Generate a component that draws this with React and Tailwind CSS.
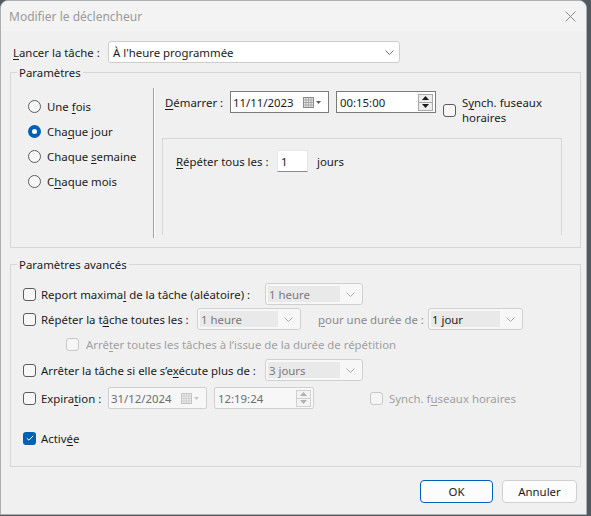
import React from "react";

const U = ({ children }) => (
  <span className="underline decoration-1 underline-offset-[2px]">{children}</span>
);

function Chevron({ color = "#8a8a8a" }) {
  return (
    <svg width="9" height="5" viewBox="0 0 9 5" fill="none">
      <path d="M0.5 0.5 L4.5 4.5 L8.5 0.5" stroke={color} strokeWidth="1" />
    </svg>
  );
}

function CalIcon({ disabled }) {
  const c = disabled ? "#c4c4c4" : "#8c8c8c";
  return (
    <svg width="18" height="11" viewBox="0 0 18 11" fill="none">
      <rect x="0.5" y="0.5" width="10" height="10" fill={disabled ? "#ececec" : "#e4e4e4"} stroke={c} />
      <path d="M3 0.5V10.5M5.5 0.5V10.5M8 0.5V10.5M0.5 3H10.5M0.5 5.5H10.5M0.5 8H10.5" stroke={c} strokeWidth="0.6" />
      <path d="M13 4 L18 4 L15.5 7 Z" fill={disabled ? "#c4c4c4" : "#5a5a5a"} />
    </svg>
  );
}

function Spin({ disabled }) {
  const tri = disabled ? "#b0b0b0" : "#1a1a1a";
  const box = disabled
    ? "w-[15px] h-[9px] flex items-center justify-center border border-[#d0d0d0] bg-[#f3f3f3]"
    : "w-[15px] h-[9px] flex items-center justify-center border border-[#a8a8a8] bg-[#ededed]";
  return (
    <div className="flex flex-col">
      <div className={box}>
        <svg width="7" height="4" viewBox="0 0 7 4">
          <path d="M0 4 L3.5 0 L7 4 Z" fill={tri} />
        </svg>
      </div>
      <div className={box + " -mt-px"}>
        <svg width="7" height="4" viewBox="0 0 7 4">
          <path d="M0 0 L7 0 L3.5 4 Z" fill={tri} />
        </svg>
      </div>
    </div>
  );
}

function Radio({ checked, children }) {
  return (
    <div className="flex items-center h-[25px]">
      {checked ? (
        <span className="w-[13px] h-[13px] rounded-full bg-[#005fb8] flex items-center justify-center">
          <span className="w-[5px] h-[5px] rounded-full bg-white" />
        </span>
      ) : (
        <span className="w-[13px] h-[13px] rounded-full border border-[#5c5c5c] bg-[#f7f7f7]" />
      )}
      <span className="ml-[6px]">{children}</span>
    </div>
  );
}

function Check({ checked, disabled }) {
  if (checked) {
    return (
      <span className="w-[13px] h-[13px] shrink-0 rounded-[3px] bg-[#005fb8] flex items-center justify-center">
        <svg width="8" height="6" viewBox="0 0 8 6" fill="none">
          <path d="M0.8 3.2 L3 5.2 L7.2 0.8" stroke="white" strokeWidth="1" />
        </svg>
      </span>
    );
  }
  return (
    <span
      className={`w-[13px] h-[13px] shrink-0 rounded-[3px] border ${
        disabled ? "border-[#c8c8c8] bg-[#f5f5f5]" : "border-[#5c5c5c] bg-[#f7f7f7]"
      }`}
    />
  );
}

function DisabledSelect({ value, width, dark }) {
  return (
    <div
      className={`${width} h-[22px] flex items-stretch border border-[#d0d0d0] rounded-[3px] bg-[#f7f7f7] p-[2px]`}
    >
      <span
        className={`flex-1 flex items-center bg-[#e9e9e9] px-[1px] ${
          dark ? "text-[#1b1b1b]" : "text-[#7a7a7a]"
        }`}
      >
        {value}
      </span>
      <span className="w-[20px] flex items-center justify-center">
        <Chevron color="#a8a8a8" />
      </span>
    </div>
  );
}

function DateBox({ value, disabled }) {
  return (
    <div
      className={`w-[99px] h-[22px] flex items-center justify-between pl-[2px] pr-[7px] border ${
        disabled
          ? "border-[#d0d0d0] rounded-[2px] bg-[#f7f7f7] text-[#6d6d6d]"
          : "border-[#7a7a7a] bg-white"
      }`}
    >
      <span>{value}</span>
      <CalIcon disabled={disabled} />
    </div>
  );
}

function TimeBox({ value, disabled }) {
  return (
    <div
      className={`w-[100px] h-[22px] flex items-center justify-between pl-[3px] pr-[2px] border ${
        disabled
          ? "border-[#d0d0d0] rounded-[2px] bg-[#f7f7f7] text-[#6d6d6d]"
          : "border-[#7a7a7a] bg-white"
      }`}
    >
      <span>{value}</span>
      <Spin disabled={disabled} />
    </div>
  );
}

export default function App() {
  return (
    <div className="w-[591px] h-[516px] bg-[#515a60] overflow-hidden font-['Noto_Sans',sans-serif] text-[11.4px] leading-[15px] text-[#1b1b1b]">
      <div className="w-[587px] h-[515px] flex flex-col bg-[#f0f0f0] border border-[#a9b0b6] rounded-t-[8px] overflow-hidden">
        {/* title bar */}
        <div className="h-[30px] shrink-0 flex items-center justify-between pl-[8px] pr-[8px] bg-[#f3f3f3]">
          <span className="text-[12px] text-[#9a9a9a]">Modifier le déclencheur</span>
          <svg width="11" height="11" viewBox="0 0 11 11" className="mr-[2px]">
            <path d="M0.5 0.5 L10.5 10.5 M10.5 0.5 L0.5 10.5" stroke="#8a8a8a" strokeWidth="1" />
          </svg>
        </div>

        <div className="flex flex-col pl-[9px]">
          {/* Lancer la tâche */}
          <div className="mt-[10px] h-[22px] flex items-center">
            <span className="w-[98px] pl-[3px]">
              <U>L</U>ancer la tâche :
            </span>
            <div className="w-[292px] h-[22px] flex items-center justify-between bg-white border border-[#cdcdcd] rounded-[3px] pl-[4px] pr-[5px]">
              <span>À l'heure programmée</span>
              <Chevron color="#707070" />
            </div>
          </div>

          {/* Paramètres */}
          <fieldset className="mt-[2px] w-[571px] border border-[#d6d6d6]">
            <legend className="ml-[6px] px-[2px]">Paramètres</legend>
            <div className="flex items-start pt-[8px] pb-[9px]">
              <div className="w-[142px] shrink-0 pl-[17px] pt-[6px] flex flex-col">
                <Radio>
                  Une <U>f</U>ois
                </Radio>
                <Radio checked>
                  Cha<U>q</U>ue jour
                </Radio>
                <Radio>
                  Chaque <U>s</U>emaine
                </Radio>
                <Radio>
                  C<U>h</U>aque mois
                </Radio>
              </div>
              <div className="w-[2px] h-[150px] shrink-0 border-l border-[#a0a0a0] border-r border-r-white" />
              <div className="h-[150px] shrink-0 flex flex-col pl-[7px]">
                <div className="mt-[3px] h-[22px] shrink-0 flex items-start">
                  <span className="ml-[3px] w-[65px] h-[22px] flex items-center">
                    <U>D</U>émarrer :
                  </span>
                  <DateBox value="11/11/2023" />
                  <div className="ml-[7px]">
                    <TimeBox value="00:15:00" />
                  </div>
                  <div className="ml-[7px] mt-[4px] flex items-center">
                    <Check />
                    <span className="ml-[6px]">
                      S<U>y</U>nch. fuseaux
                      <br />
                      horaires
                    </span>
                  </div>
                </div>
                <div className="mt-[25px] w-[400px] h-[97px] shrink-0 border-t border-x border-[#d6d6d6]">
                  <div className="mt-[11px] ml-[13px] h-[22px] flex items-center">
                    <span className="w-[101px]">
                      <U>R</U>épéter tous les :
                    </span>
                    <div className="w-[31px] h-[22px] flex items-center pl-[3px] bg-white border border-[#e6e6e6] border-b-[#8a8a8a]">
                      1
                    </div>
                    <span className="ml-[9px]">jours</span>
                  </div>
                </div>
              </div>
            </div>
          </fieldset>

          {/* Paramètres avancés */}
          <fieldset className="mt-[9px] w-[571px] border border-[#d6d6d6]">
            <legend className="ml-[6px] px-[2px]">Paramètres avancés</legend>
            <div className="flex flex-col pl-[12px] pb-[17px]">
              <div className="mt-[11px] h-[22px] flex items-center">
                <Check />
                <span className="ml-[5px] w-[224px]">
                  Report maxima<U>l</U> de la tâche (aléatoire) :
                </span>
                <DisabledSelect value="1 heure" width="w-[98px]" />
              </div>
              <div className="mt-[3px] h-[22px] flex items-center">
                <Check />
                <span className="ml-[5px] w-[156px]">
                  Répéter la t<U>â</U>che toutes les :
                </span>
                <DisabledSelect value="1 heure" width="w-[104px]" />
                <span className="ml-[17px] w-[110px] text-[#8a8a8a]">
                  <U>p</U>our une durée de :
                </span>
                <DisabledSelect value="1 jour" width="w-[95px]" dark />
              </div>
              <div className="mt-[3px] h-[22px] flex items-center pl-[43px]">
                <Check disabled />
                <span className="ml-[7px] text-[#a0a0a0]">
                  Arrê<U>t</U>er toutes les tâches à l’issue de la durée de répétition
                </span>
              </div>
              <div className="mt-[4px] h-[22px] flex items-center">
                <Check />
                <span className="ml-[5px] w-[224px]">
                  Arrêter la tâche si elle s’e<U>x</U>écute plus de :
                </span>
                <DisabledSelect value="3 jours" width="w-[98px]" />
              </div>
              <div className="mt-[6px] h-[22px] flex items-center">
                <Check />
                <span className="ml-[5px] w-[67px]">
                  Expira<U>t</U>ion :
                </span>
                <DateBox value="31/12/2024" disabled />
                <div className="ml-[7px]">
                  <TimeBox value="12:19:24" disabled />
                </div>
                <div className="ml-[56px] flex items-center">
                  <Check disabled />
                  <span className="ml-[6px] text-[#a0a0a0]">
                    Synch. f<U>u</U>seaux horaires
                  </span>
                </div>
              </div>
              <div className="mt-[18px] h-[22px] flex items-center">
                <Check checked />
                <span className="ml-[5px]">
                  Activ<U>é</U>e
                </span>
              </div>
            </div>
          </fieldset>

          {/* buttons */}
          <div className="mt-[13px] w-[567px] flex justify-end gap-[9px]">
            <button className="w-[73px] h-[23px] rounded-[4px] bg-[#fcfcfc] border border-[#005fb8] shadow-[inset_0_0_0_1px_#ffffff]">
              OK
            </button>
            <button className="w-[75px] h-[23px] rounded-[4px] bg-[#fcfcfc] border border-[#d0d0d0]">
              Annuler
            </button>
          </div>
        </div>
      </div>
    </div>
  );
}
